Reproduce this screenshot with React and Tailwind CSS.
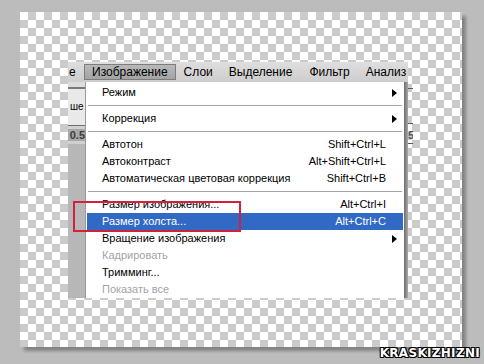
const checker =
  'bg-[conic-gradient(#cbcbcb_25%,#ffffff_0_50%,#cbcbcb_0_75%,#ffffff_0)] bg-[length:16px_16px]';

const menuFont = { fontFamily: '"Liberation Sans", Arial, sans-serif' };

const Arrow = () => (
  <svg width="5" height="8" viewBox="0 0 5 8" className="mr-[6px] shrink-0">
    <path d="M0 0 L5 4 L0 8 Z" fill="#000" />
  </svg>
);

const Item = ({ label, shortcut, arrow, disabled, active }) => (
  <div
    className={`flex h-[17px] items-center whitespace-nowrap text-[11px] leading-none ${
      active ? 'bg-[#316ac5] text-white' : disabled ? 'text-[#a3a3a3]' : 'text-black'
    }`}
  >
    <span className="flex-1 pl-[15px]">{label}</span>
    {shortcut && <span className="mr-[17px] shrink-0">{shortcut}</span>}
    {arrow && <Arrow />}
  </div>
);

const Separator = () => (
  <div className="flex h-[9px] items-center px-[1px]">
    <div className="h-px w-full bg-[#a5a5a5]" />
  </div>
);

const App = () => {
  return (
    <div className="relative h-[364px] w-[484px] overflow-hidden bg-[#bcbcbc] pl-[20px] pt-[12px]" style={menuFont}>
      <div className={`h-[335px] w-[442px] ${checker} pl-[48px] pt-[50px] shadow-[4px_4px_3px_rgba(0,0,0,0.3)]`}>
        <div className="w-[345px]">
          {/* menu bar */}
          <div className="flex h-[20px] w-[340px] items-center overflow-hidden whitespace-nowrap bg-gradient-to-b from-[#dedede] to-[#cdcdcd] text-[12px] text-black">
            <span className="w-[16px] shrink-0 pl-[1px]">е</span>
            <span className="flex h-[16px] shrink-0 items-center border border-[#7d7d7d] bg-gradient-to-b from-[#b9b9b9] to-[#a3a3a3] px-[7px]">
              Изображение
            </span>
            <span className="shrink-0 pl-[8px] pr-[8px]">Слои</span>
            <span className="shrink-0 pl-[8px] pr-[8px]">Выделение</span>
            <span className="shrink-0 pl-[9px] pr-[8px]">Фильтр</span>
            <span className="shrink-0 pl-[8px]">Анализ</span>
          </div>

          <div className="flex">
            {/* left strip of the options bar */}
            <div className="flex h-[216px] w-[17px] shrink-0 flex-col bg-[#b7b7b7]">
              <div className="h-[5px] bg-[#dcdcdc]" />
              <div className="h-[2px] bg-[#7a7a7a]" />
              <div className="flex h-[36px] items-center bg-[#e9e9e9] pl-[2px] text-[10px] leading-none text-black">
                ше
              </div>
              <div className="h-px bg-[#6f6f6f]" />
              <div className="h-[3px] bg-[#d0d0d0]" />
              <div className="flex h-[12px] items-center justify-end overflow-hidden bg-[#a9a9a9] text-[11px] font-bold leading-none text-[#3d3d3d]">
                0.5
              </div>
              <div className="h-[3px] bg-[#d0d0d0]" />
            </div>

            {/* dropdown */}
            <div className="flex shrink-0">
              <div className="w-[319px] border-l border-[#9a9a9a] bg-white px-[1px] pt-[2px]">
                <Item label="Режим" arrow />
                <Separator />
                <Item label="Коррекция" arrow />
                <Separator />
                <Item label="Автотон" shortcut="Shift+Ctrl+L" />
                <Item label="Автоконтраст" shortcut="Alt+Shift+Ctrl+L" />
                <Item label="Автоматическая цветовая коррекция" shortcut="Shift+Ctrl+B" />
                <Separator />
                <Item label="Размер изображения..." shortcut="Alt+Ctrl+I" />
                <Item label="Размер холста..." shortcut="Alt+Ctrl+C" active />
                <Item label="Вращение изображения" arrow />
                <Item label="Кадрировать" disabled />
                <Item label="Тримминг..." />
                <Item label="Показать все" disabled />
              </div>
              <div className="w-[4px] bg-gradient-to-r from-[#6e6e6e] to-[#a9a9a9]" />
            </div>

            {/* right strip */}
            <div className="flex w-[5px] shrink-0 flex-col">
              <div className="mt-[6px] h-px bg-[#5a5a5a]" />
              <div className="mt-[34px] h-px bg-[#5a5a5a]" />
              <div className="mt-[5px] h-[12px] overflow-hidden text-[11px] font-bold leading-[12px] text-[#555]">5</div>
              <div className="mt-[2px] h-px bg-[#5a5a5a]" />
            </div>
          </div>
        </div>
      </div>

      {/* red highlight frame */}
      <div className="absolute left-[73px] top-[201px] h-[31px] w-[168px] border-2 border-[#d3203c]" />

      {/* watermark */}
      <div
        className="absolute bottom-[2px] right-[4px] text-[12px] font-bold tracking-[0.3px] text-white [text-shadow:-1px_-1px_0_#000,1px_-1px_0_#000,-1px_1px_0_#000,1px_1px_0_#000]"
        style={{ fontFamily: '"DejaVu Sans", sans-serif' }}
      >
        KRASKIZHIZNI
      </div>
    </div>
  );
};

export default App;
